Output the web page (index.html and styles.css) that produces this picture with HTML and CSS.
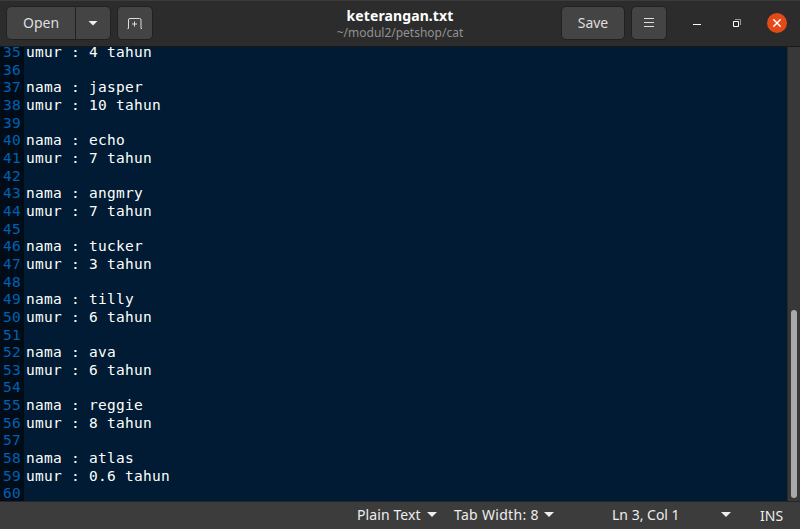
FILE: index.html
```
<!DOCTYPE html>
<html lang="id">
<head>
<meta charset="utf-8">
<title>keterangan.txt</title>
<link rel="stylesheet" href="styles.css">
</head>
<body>
<div class="window">
  <header class="headerbar">
    <div class="side">
      <div class="split">
        <button class="btn open"><span class="label">Open</span></button>
        <button class="btn recent"><i class="arrow"></i></button>
      </div>
      <button class="btn new-tab">
        <svg width="16" height="14" viewBox="0 0 16 14" fill="none" stroke="#dedede"><path d="M.5 11.500h1V3q0-1.500 1.500-1.500h9.500q1.500 0 1.500 1.500v8.500h1M7.500 4.500v5M5 7h5"/></svg>
      </button>
    </div>
    <div class="heading"><div class="title">keterangan.txt</div><div class="path">~/modul2/petshop/cat</div></div>
    <div class="side end">
      <button class="btn save"><span class="label">Save</span></button>
      <button class="btn menu"><svg width="10" height="10" viewBox="0 0 10 10" stroke="#dedede"><path d="M0 .5h10M0 4.500h10M0 8.500h10"/></svg></button>
      <svg class="min" width="8" height="10" viewBox="0 0 8 10" stroke="#fff"><path d="M0 7.500h8"/></svg>
      <svg class="max" width="8" height="8" viewBox="0 0 8 8" fill="none"><path d="M2 .5h5.500V6" stroke="#999"/><path d="M.5 2.500h5v5h-5z" stroke="#fff"/></svg>
      <button class="close"><svg width="8" height="8" viewBox="0 0 8 8" stroke="#fff" stroke-width="1.500"><path d="M.3.3l7.400 7.400M7.700.3L.3 7.700"/></svg></button>
    </div>
  </header>
  <main class="editor">
    <pre class="gutter">35
36
37
38
39
40
41
42
43
44
45
46
47
48
49
50
51
52
53
54
55
56
57
58
59
60</pre>
    <pre class="code">umur : 4 tahun

nama : jasper
umur : 10 tahun

nama : echo
umur : 7 tahun

nama : angmry
umur : 7 tahun

nama : tucker
umur : 3 tahun

nama : tilly
umur : 6 tahun

nama : ava
umur : 6 tahun

nama : reggie
umur : 8 tahun

nama : atlas
umur : 0.6 tahun
</pre>
    <div class="scroll"><div class="thumb"></div></div>
  </main>
  <footer class="statusbar">
    <span class="lang">Plain Text</span><i class="arrow"></i>
    <span class="tabs">Tab Width: 8</span><i class="arrow"></i>
    <span class="pos">Ln 3, Col 1</span><i class="arrow"></i>
    <span class="ins">INS</span>
  </footer>
</div>
</body>
</html>
```
FILE: styles.css
```
* { box-sizing: border-box; }
body { margin: 0; background: #2c2c2c; overflow: hidden; font-family: "Noto Sans", sans-serif; }
.window { width: 800px; height: 529px; display: flex; flex-direction: column; }
.headerbar { height: 47px; flex: none; display: grid; grid-template-columns: 300px 200px 300px; background: #2c2c2c; border-top: 1px solid #3b3b3b; border-bottom: 1px solid #191919; }
.side { display: flex; align-items: flex-start; padding: 5px 0 0 6px; }
.split { display: flex; margin-right: 6px; }
.btn { height: 34px; padding: 0; display: flex; align-items: center; justify-content: center; background: #444; border: 1px solid #212121; border-radius: 5px; color: #dedede; font: 14px "Noto Sans", sans-serif; }
.label { padding-bottom: 2px; }
.open { width: 70px; border-radius: 5px 0 0 5px; }
.recent { width: 36px; margin-left: -1px; border-radius: 0 5px 5px 0; }
.new-tab { width: 36px; }
.new-tab svg { margin-top: 1px; }
.arrow { flex: none; width: 10px; height: 5px; background: #eee; clip-path: polygon(0 0, 100% 0, 50% 100%); }
.heading { text-align: center; padding-top: 5px; white-space: nowrap; }
.title { color: #fff; font-weight: 700; font-size: 14px; line-height: 19px; letter-spacing: .1px; }
.path { color: #919191; font-size: 12px; line-height: 15px; letter-spacing: 0; }
.end { padding-left: 61px; }
.save { width: 64px; }
.menu { width: 36px; margin-left: 6px; }
.min { margin: 11px 0 0 26px; }
.max { margin: 13px 0 0 32px; }
.close { width: 20px; height: 20px; margin: 7px 0 0 26px; padding: 0; border: 0; border-radius: 50%; background: #e24a18; display: flex; align-items: center; justify-content: center; }
.editor { height: 454px; flex: none; display: flex; overflow: hidden; background: #001b33; }
.gutter, .code { margin: -3px 0 0; font: 14.500px/17.65px "DejaVu Sans Mono", monospace; letter-spacing: .27px; }
.gutter { width: 24px; padding-left: 3px; background: #000d19; color: #0061b3; }
.code { flex: 1; padding-left: 2px; color: #fff; }
.scroll { width: 13px; background: #383838; border-left: 1px solid #282828; padding: 263px 0 0 3px; }
.thumb { width: 6px; height: 188px; border-radius: 3px; background: #a9a9a9; }
.statusbar { height: 28px; display: flex; align-items: center; background: #3c3c3c; border-top: 1px solid #252525; color: #eee; font-size: 14px; padding: 0 0 2px 357px; white-space: nowrap; }
.lang { width: 70px; letter-spacing: .1px; }
.tabs { width: 90px; margin-left: 17px; letter-spacing: .3px; }
.pos { width: 109px; margin-left: 58px; }
.ins { margin: 2px 0 0 29px; }
```
